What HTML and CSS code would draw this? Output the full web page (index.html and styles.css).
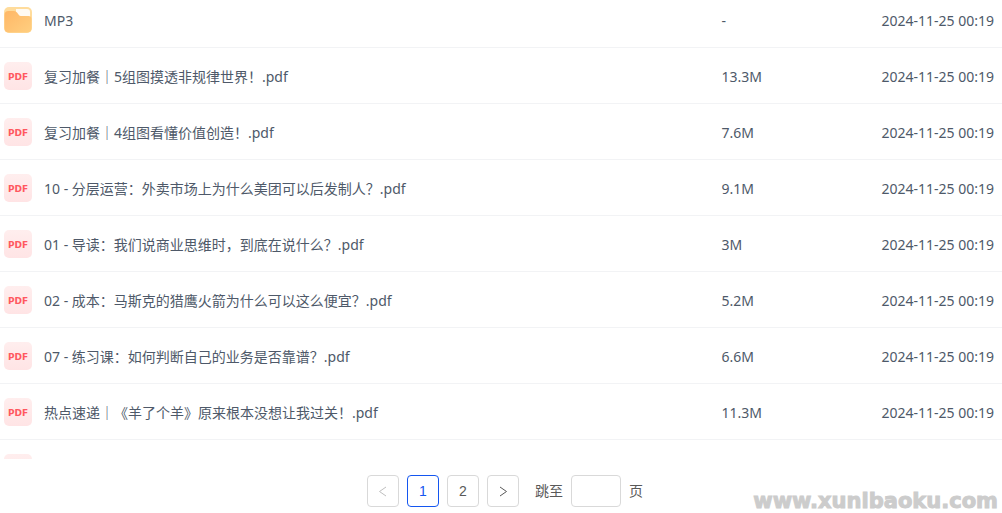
FILE: index.html
```html
<!DOCTYPE html>
<html lang="zh-CN">
<head>
  <meta charset="UTF-8">
  <meta name="viewport" content="width=device-width, initial-scale=1.0">
  <title>文件列表</title>
  <link rel="stylesheet" href="styles.css">
</head>
<body>

<svg class="defs" aria-hidden="true">
  <defs>
    <linearGradient id="folderFill" x1="0" y1="0" x2="1" y2="1">
      <stop offset="0" stop-color="#ffb766"/>
      <stop offset="1" stop-color="#ffcf80"/>
    </linearGradient>
    <linearGradient id="pdfFill" x1="0" y1="0" x2="0" y2="1">
      <stop offset="0" stop-color="#ffeeee"/>
      <stop offset="1" stop-color="#ffe4e5"/>
    </linearGradient>
    <symbol id="folder" viewBox="0 0 28 28">
      <rect x="0" y="1" width="28" height="26" rx="5" fill="#ffdc9c"/>
      <path d="M12 3h11q3 0 3 3v6H12z" fill="#fffaf2"/>
      <path d="M.5 9q0-4 4-4H10q2 0 3 1.500l1.500 2Q15.500 10 17 10h7.500q3 0 3 3v9q0 4.500-4.500 4.500H5Q.5 26.500.5 22z" fill="url(#folderFill)"/>
    </symbol>
    <symbol id="pdf" viewBox="0 0 28 28">
      <rect x="0" y="0" width="28" height="28" rx="5" fill="url(#pdfFill)"/>
      <text class="pdf-text" x="14" y="18" text-anchor="middle">PDF</text>
    </symbol>
  </defs>
</svg>

<main class="file-list">
  <table class="file-table">
    <colgroup>
      <col class="col-name">
      <col class="col-size">
      <col class="col-date">
    </colgroup>
    <tbody>
      <tr>
        <td><a class="file" href="#"><svg class="icon"><use href="#folder"/></svg>MP3</a></td>
        <td>-</td>
        <td class="date">2024-11-25 00:19</td>
      </tr>
      <tr>
        <td><a class="file" href="#"><svg class="icon"><use href="#pdf"/></svg>复习加餐｜5组图摸透非规律世界！.pdf</a></td>
        <td>13.3M</td>
        <td class="date">2024-11-25 00:19</td>
      </tr>
      <tr>
        <td><a class="file" href="#"><svg class="icon"><use href="#pdf"/></svg>复习加餐｜4组图看懂价值创造！.pdf</a></td>
        <td>7.6M</td>
        <td class="date">2024-11-25 00:19</td>
      </tr>
      <tr>
        <td><a class="file" href="#"><svg class="icon"><use href="#pdf"/></svg>10 - 分层运营：外卖市场上为什么美团可以后发制人？.pdf</a></td>
        <td>9.1M</td>
        <td class="date">2024-11-25 00:19</td>
      </tr>
      <tr>
        <td><a class="file" href="#"><svg class="icon"><use href="#pdf"/></svg>01 - 导读：我们说商业思维时，到底在说什么？.pdf</a></td>
        <td>3M</td>
        <td class="date">2024-11-25 00:19</td>
      </tr>
      <tr>
        <td><a class="file" href="#"><svg class="icon"><use href="#pdf"/></svg>02 - 成本：马斯克的猎鹰火箭为什么可以这么便宜？.pdf</a></td>
        <td>5.2M</td>
        <td class="date">2024-11-25 00:19</td>
      </tr>
      <tr>
        <td><a class="file" href="#"><svg class="icon"><use href="#pdf"/></svg>07 - 练习课：如何判断自己的业务是否靠谱？.pdf</a></td>
        <td>6.6M</td>
        <td class="date">2024-11-25 00:19</td>
      </tr>
      <tr>
        <td><a class="file" href="#"><svg class="icon"><use href="#pdf"/></svg>热点速递｜《羊了个羊》原来根本没想让我过关！.pdf</a></td>
        <td>11.3M</td>
        <td class="date">2024-11-25 00:19</td>
      </tr>
      <tr>
        <td><a class="file" href="#" aria-label="PDF"><svg class="icon"><use href="#pdf"/></svg></a></td>
        <td></td>
        <td class="date"></td>
      </tr>
    </tbody>
  </table>
</main>

<nav class="pagination">
  <button class="page-btn" disabled aria-label="上一页">
    <svg class="arrow" viewBox="0 0 12 12"><path d="M9 2L2.500 6.500 9 11"/></svg>
  </button>
  <button class="page-btn active">1</button>
  <button class="page-btn">2</button>
  <button class="page-btn" aria-label="下一页">
    <svg class="arrow" viewBox="0 0 12 12"><path d="M3 2l6.500 4.500L3 11"/></svg>
  </button>
  <label class="jump">跳至 <input type="text" class="jump-input"> 页</label>
</nav>

<div class="watermark">www.xunibaoku.com</div>

</body>
</html>
```
FILE: styles.css
```css
* {
  box-sizing: border-box;
}
body {
  margin: 0;
  height: 100vh;
  display: flex;
  flex-direction: column;
  position: relative;
  overflow: hidden;
  background: #fff;
  color: #4e5969;
  font-family: "Noto Sans", "Noto Sans CJK SC", sans-serif;
  font-size: 14px;
  line-height: 22px;
}
.defs {
  position: absolute;
  width: 0;
  height: 0;
}
.file-list {
  flex: 1;
  min-height: 0;
  overflow: hidden;
}
/* first row is partly scrolled out of view */
.file-table {
  width: 100%;
  margin-top: -8px;
  table-layout: fixed;
  border-collapse: separate;
  border-spacing: 0;
}
.col-name {
  width: 72%;
}
.col-size {
  width: 12%;
}
.file-table td {
  height: 56px;
  padding: 2px 0 0;
  border-bottom: 1px solid #f2f3f5;
  vertical-align: middle;
  white-space: nowrap;
}
.file-table .date {
  padding-right: 8px;
  text-align: right;
}
.file {
  display: flex;
  align-items: center;
  gap: 12px;
  padding-left: 4px;
  color: inherit;
  text-decoration: none;
}
.icon {
  width: 28px;
  height: 28px;
  margin-bottom: 2px;
  flex: none;
}
.pdf-text {
  font-family: "DejaVu Sans", sans-serif;
  font-size: 9px;
  font-weight: bold;
  fill: #ff5860;
}
.pagination {
  display: flex;
  justify-content: center;
  gap: 8px;
  padding: 16px 0 6px 8px;
  font-family: "Liberation Sans", "Noto Sans CJK SC", sans-serif;
  color: #595959;
}
.page-btn {
  display: flex;
  align-items: center;
  justify-content: center;
  width: 32px;
  height: 32px;
  padding: 0;
  border: 1px solid #d9d9d9;
  border-radius: 4px;
  background: #fff;
  color: #595959;
  font-family: inherit;
  font-size: 14px;
  cursor: pointer;
}
.page-btn.active {
  border-color: #1456f0;
  color: #1456f0;
}
.page-btn:disabled {
  color: #bfbfbf;
  cursor: not-allowed;
}
.arrow {
  width: 12px;
  height: 12px;
  fill: none;
  stroke: currentColor;
}
.jump {
  display: flex;
  align-items: center;
  gap: 8px;
  margin-left: 8px;
}
.jump-input {
  width: 50px;
  height: 32px;
  padding: 4px 11px;
  border: 1px solid #d9d9d9;
  border-radius: 4px;
  font-family: inherit;
  font-size: 14px;
}
.watermark {
  position: absolute;
  right: 4px;
  bottom: 0;
  color: #ccc;
  font-family: "DejaVu Sans", sans-serif;
  font-size: 21px;
  font-weight: bold;
  line-height: 24px;
  -webkit-text-stroke: 1px #ccc;
}
```
